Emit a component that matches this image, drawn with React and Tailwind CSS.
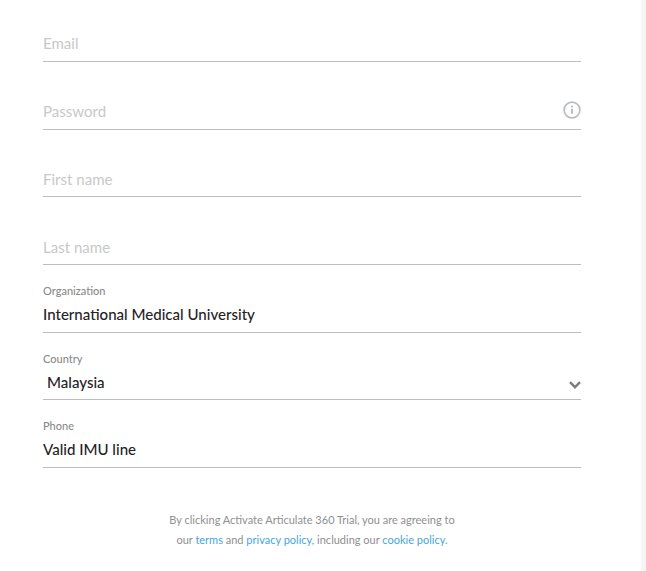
const font = { fontFamily: '"Lato", sans-serif' };

function Field({ label, placeholder, value, indent, children, h, b }) {
  return (
    <div className={`relative border-b border-[#bdbdbd] ${h}`}>
      {label && <div className="absolute left-0 top-[19px] text-[11px] font-medium leading-[14px] text-[#8a8a8a]">{label}</div>}
      <div className={`absolute ${b} text-[15.05px] leading-[22px] ${indent ? "left-[4px]" : "left-0"} ${placeholder ? "text-[#c8c8c8]" : "font-medium text-[#1f2326]"}`}>
        {placeholder || value}
      </div>
      {children}
    </div>
  );
}

export default function App() {
  return (
    <div style={font} className="flex h-[571px] w-[646px] overflow-hidden bg-white">
      <div className="w-[641px] pl-[43px] pr-[60px] pt-[27px]">
        <Field placeholder="Email" h="h-[35px]" b="bottom-[7px]" />
        <Field placeholder="Password" h="h-[68px]" b="bottom-[7px]">
          <svg className="absolute right-0 bottom-[10px]" width="18" height="18" viewBox="0 0 18 18" fill="none">
            <circle cx="9" cy="9" r="7.9" stroke="#b9bdbf" strokeWidth="1.7" />
            <circle cx="9" cy="5.6" r="1.1" fill="#b9bdbf" />
            <rect x="8" y="7.8" width="2" height="5" fill="#b9bdbf" />
          </svg>
        </Field>
        <Field placeholder="First name" h="h-[67px]" b="bottom-[6px]" />
        <Field placeholder="Last name" h="h-[68px]" b="bottom-[6px]" />
        <Field label="Organization" value="International Medical University" h="h-[68px]" b="bottom-[7px]" />
        <Field label="Country" value="Malaysia" indent h="h-[67px]" b="bottom-[6px]">
          <svg className="absolute right-0 bottom-[10px]" width="12" height="8" viewBox="0 0 12 8" fill="none">
            <path d="M1 1.2 6 6.2l5-5" stroke="#7d7d7d" strokeWidth="2.4" />
          </svg>
        </Field>
        <Field label="Phone" value="Valid IMU line" h="h-[68px]" b="bottom-[7px]" />
        <div className="pt-[41.5px] text-center text-[11px] leading-[20px] text-[#8f8f8f]">
          <p>By clicking Activate Articulate 360 Trial, you are agreeing to</p>
          <p>
            our <a className="text-[#45a5e0]">terms</a> and <a className="text-[#45a5e0]">privacy policy</a>, including our <a className="text-[#45a5e0]">cookie policy</a>.
          </p>
        </div>
      </div>
      <div className="w-[5px] bg-[#f5f5f5]" />
    </div>
  );
}
